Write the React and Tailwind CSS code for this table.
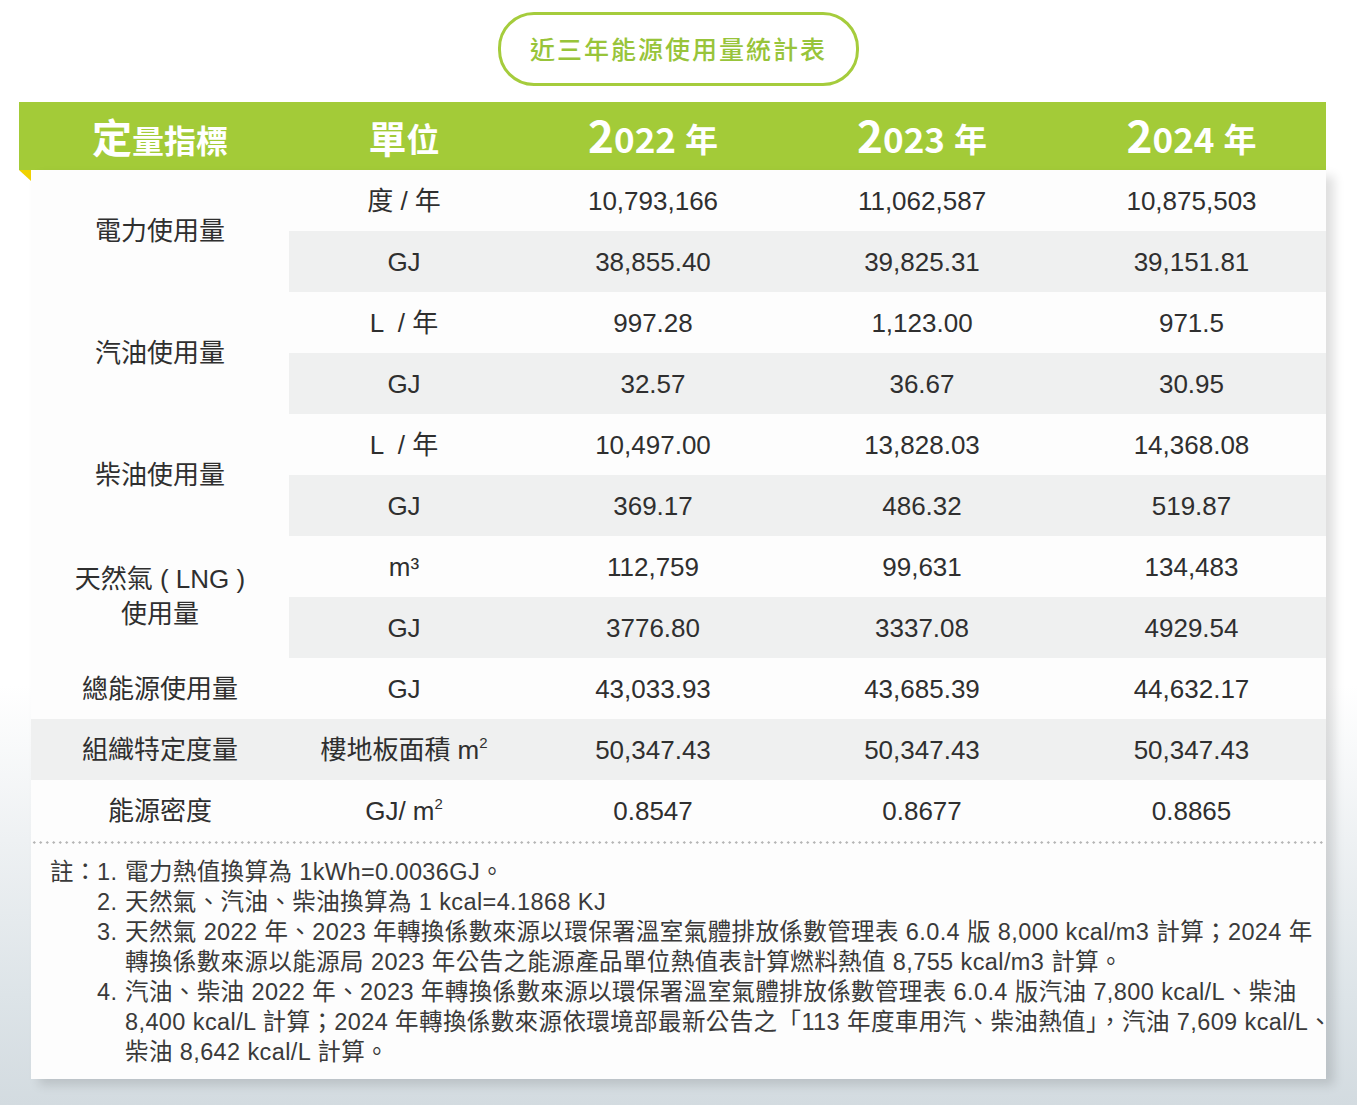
import React from "react";

const groups = [
  {
    label: ["電力使用量"],
    rows: [
      ["度 / 年", "10,793,166", "11,062,587", "10,875,503"],
      ["GJ", "38,855.40", "39,825.31", "39,151.81"],
    ],
  },
  {
    label: ["汽油使用量"],
    rows: [
      ["L  / 年", "997.28", "1,123.00", "971.5"],
      ["GJ", "32.57", "36.67", "30.95"],
    ],
  },
  {
    label: ["柴油使用量"],
    rows: [
      ["L  / 年", "10,497.00", "13,828.03", "14,368.08"],
      ["GJ", "369.17", "486.32", "519.87"],
    ],
  },
  {
    label: ["天然氣 ( LNG )", "使用量"],
    rows: [
      ["m³", "112,759", "99,631", "134,483"],
      ["GJ", "3776.80", "3337.08", "4929.54"],
    ],
  },
];

const singles = [
  { label: "總能源使用量", unit: "GJ", values: ["43,033.93", "43,685.39", "44,632.17"], gray: false },
  { label: "組織特定度量", unit: <>樓地板面積 m<sup className="text-[15px] -top-[11px]">2</sup></>, values: ["50,347.43", "50,347.43", "50,347.43"], gray: true },
  { label: "能源密度", unit: <>GJ/ m<sup className="text-[15px] -top-[11px]">2</sup></>, values: ["0.8547", "0.8677", "0.8865"], gray: false },
];

const notes = [
  ["1.", ["電力熱值換算為 1kWh=0.0036GJ。"]],
  ["2.", ["天然氣、汽油、柴油換算為 1 kcal=4.1868 KJ"]],
  [
    "3.",
    [
      "天然氣 2022 年、2023 年轉換係數來源以環保署溫室氣體排放係數管理表 6.0.4 版 8,000 kcal/m3 計算；2024 年",
      "轉換係數來源以能源局 2023 年公告之能源產品單位熱值表計算燃料熱值 8,755 kcal/m3 計算。",
    ],
  ],
  [
    "4.",
    [
      "汽油、柴油 2022 年、2023 年轉換係數來源以環保署溫室氣體排放係數管理表 6.0.4 版汽油 7,800 kcal/L、柴油",
      "8,400 kcal/L 計算；2024 年轉換係數來源依環境部最新公告之「113 年度車用汽、柴油熱值」，汽油 7,609 kcal/L、",
      "柴油 8,642 kcal/L 計算。",
    ],
  ],
];

const cell = "flex items-center justify-center text-center";

const App = () => {
  return (
    <div
      className="w-[1357px] h-[1105px] overflow-hidden bg-[linear-gradient(to_bottom,#ffffff_0%,#ffffff_62%,#eef1f3_76%,#dde4e8_90%,#d3dbe0_100%)] text-[#333] pt-[12px]"
      style={{ fontFamily: '"Liberation Sans", "Noto Sans CJK TC", sans-serif' }}
    >
      {/* Title pill */}
      <div className="flex justify-center">
        <div className="w-[361px] h-[74px] rounded-[36px] border-[3px] border-[#a5cc3c] bg-white flex items-center justify-center">
          <span
            className="text-[25px] tracking-[2px] text-[#98c43a] font-medium"
            style={{ fontFamily: '"Noto Sans CJK TC", sans-serif' }}
          >
            近三年能源使用量統計表
          </span>
        </div>
      </div>

      {/* Table card */}
      <div className="relative mt-[16px]">
        {/* Header bar */}
        <div
          className="ml-[19px] w-[1307px] h-[68px] bg-[#a3cb38] pl-[12px] grid grid-cols-[258px_230px_268px_270px_269px] text-white font-bold"
          style={{ fontFamily: '"Noto Sans CJK TC", sans-serif' }}
        >
          <div className={`${cell} items-end pb-[14px]`}>
            <span className="text-[40px] leading-none">定</span>
            <span className="text-[32px] leading-none pb-[1px]">量指標</span>
          </div>
          <div className={`${cell} items-end pb-[14px]`}>
            <span className="text-[38px] leading-none">單</span>
            <span className="text-[33px] leading-none pb-[1px]">位</span>
          </div>
          {["022", "023", "024"].map((y) => (
            <div key={y} className={`${cell} items-end pb-[14px]`}>
              <span className="text-[44px] leading-none">2</span>
              <span className="text-[35px] leading-none pb-[1px]">{y}</span>
              <span className="text-[33px] leading-none pb-[1px] ml-[9px]">年</span>
            </div>
          ))}
        </div>

        {/* Folded corner */}
        <svg className="absolute left-[19px] top-[68px]" width="12" height="11" viewBox="0 0 12 11">
          <polygon points="0,0 12,0 12,11" fill="#f0d200" />
        </svg>

        <div className="ml-[31px] w-[1295px] bg-[#fdfdfd] shadow-[8px_6px_10px_rgba(0,0,0,0.13)] pb-[12px]">
          <div className="grid grid-cols-[258px_230px_268px_270px_269px] auto-rows-[61px] text-[26px] text-[#2f2f2f]">
            {groups.map((g, gi) => (
              <React.Fragment key={gi}>
                <div className={`${cell} row-span-2 flex-col leading-[35px] bg-[#fdfdfd] whitespace-pre`}>
                  {g.label.map((l) => (
                    <span key={l}>{l}</span>
                  ))}
                </div>
                {g.rows.map((r, ri) =>
                  r.map((v, vi) => (
                    <div
                      key={`${ri}-${vi}`}
                      className={`${cell} whitespace-pre pt-[2px] ${ri === 1 ? "bg-[#eff0f0]" : "bg-[#fdfdfd]"}`}
                    >
                      {v}
                    </div>
                  ))
                )}
              </React.Fragment>
            ))}
            {singles.map((s) => (
              <React.Fragment key={s.label}>
                <div className={`${cell} pt-[2px] ${s.gray ? "bg-[#eff0f0]" : "bg-[#fdfdfd]"}`}>{s.label}</div>
                <div className={`${cell} pt-[2px] ${s.gray ? "bg-[#eff0f0]" : "bg-[#fdfdfd]"}`}>
                  <span>{s.unit}</span>
                </div>
                {s.values.map((v, i) => (
                  <div key={i} className={`${cell} pt-[2px] ${s.gray ? "bg-[#eff0f0]" : "bg-[#fdfdfd]"}`}>
                    {v}
                  </div>
                ))}
              </React.Fragment>
            ))}
          </div>

          {/* Dotted rule */}
          <div className="h-[3px] bg-[radial-gradient(circle,#b5b5b5_1px,transparent_1.4px)] bg-[length:6.5px_3px] bg-repeat-x" />

          {/* Notes */}
          <div className="flex pl-[19px] pt-[13px] text-[23.5px] tracking-[0.4px] leading-[30px] text-[#3a3a3a] whitespace-nowrap">
            <span className="w-[48px] tracking-normal">註：</span>
            <div className="flex flex-col">
              {notes.map(([n, lines]) => (
                <div key={n} className="flex">
                  <span className="w-[28px]">{n}</span>
                  <div className="flex flex-col">
                    {lines.map((l, i) => (
                      <span key={i}>{l}</span>
                    ))}
                  </div>
                </div>
              ))}
            </div>
          </div>
        </div>
      </div>
    </div>
  );
};

export default App;
